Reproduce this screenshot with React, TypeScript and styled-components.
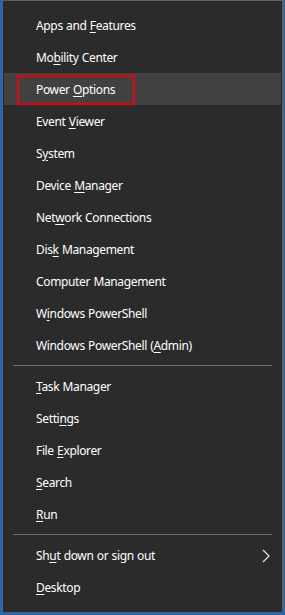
import React from 'react';
import styled, { createGlobalStyle } from 'styled-components';

type Item = {
	label: string;
	key: number; // index of the access-key letter
	hover?: boolean;
	marked?: boolean;
	submenu?: boolean;
};

const groups: Item[][] = [
	[
		{ label: 'Apps and Features', key: 9 },
		{ label: 'Mobility Center', key: 2 },
		{ label: 'Power Options', key: 6, hover: true, marked: true },
		{ label: 'Event Viewer', key: 6 },
		{ label: 'System', key: 1 },
		{ label: 'Device Manager', key: 7 },
		{ label: 'Network Connections', key: 3 },
		{ label: 'Disk Management', key: 3 },
		{ label: 'Computer Management', key: 13 },
		{ label: 'Windows PowerShell', key: 1 },
		{ label: 'Windows PowerShell (Admin)', key: 20 },
	],
	[
		{ label: 'Task Manager', key: 0 },
		{ label: 'Settings', key: 5 },
		{ label: 'File Explorer', key: 5 },
		{ label: 'Search', key: 0 },
		{ label: 'Run', key: 0 },
	],
	[
		{ label: 'Shut down or sign out', key: 2, submenu: true },
		{ label: 'Desktop', key: 0 },
	],
];

const GlobalStyle = createGlobalStyle`
	html, body {
		margin: 0;
		padding: 0;
		background: #1a6bbd;
	}
	body {
		font-family: "Noto Sans", "Open Sans", sans-serif;
		-webkit-font-smoothing: antialiased;
	}
`;

const Desk = styled.div`
	width: 285px;
	height: 615px;
	padding: 0 0 0 2px;
	box-sizing: border-box;
`;

const Menu = styled.div`
	width: 282px;
	height: 613px;
	box-sizing: border-box;
	background: #2b2b2b;
	border: 1px solid #5f5f5f;
	border-right-width: 2px;
	padding: 8px 1px 0 1px;
	display: flex;
	flex-direction: column;
`;

const Row = styled.div<{ $hover?: boolean }>`
	position: relative;
	height: 32px;
	display: flex;
	align-items: center;
	padding-left: 32px;
	background: ${({ $hover }) => ($hover ? '#414141' : 'transparent')};
	color: #ffffff;
	font-size: 12px;
	letter-spacing: -0.35px;
	word-spacing: 0.5px;
`;

const AccessKey = styled.span`
	text-decoration: underline;
	text-underline-offset: 2px;
	text-decoration-thickness: 1px;
`;

const Marker = styled.div`
	position: absolute;
	left: 13px;
	top: 2px;
	width: 118px;
	height: 30px;
	box-sizing: border-box;
	border: 2px solid #e8000f;
	pointer-events: none;
`;

const Separator = styled.div`
	height: 9px;
	display: flex;
	align-items: center;
	padding: 0 9px 0 9px;

	&::after {
		content: '';
		flex: 1;
		height: 1px;
		background: #6e6e6e;
	}
`;

const Chevron = styled.svg`
	position: absolute;
	right: 11px;
	top: 10px;
`;

const Label = ({ label, k }: { label: string; k: number }) => (
	<span>
		{label.slice(0, k)}
		<AccessKey>{label[k]}</AccessKey>
		{label.slice(k + 1)}
	</span>
);

const App = () => {
	return (
		<>
			<GlobalStyle />
			<Desk>
				<Menu>
					{groups.map((group, gi) => (
						<React.Fragment key={gi}>
							{gi > 0 && <Separator />}
							{group.map((item) => (
								<Row key={item.label} $hover={item.hover}>
									<Label label={item.label} k={item.key} />
									{item.marked && <Marker />}
									{item.submenu && (
										<Chevron width="8" height="14" viewBox="0 0 8 14">
											<polyline points="1,1 7,7 1,13" fill="none" stroke="#e6e6e6" strokeWidth="1.2" />
										</Chevron>
									)}
								</Row>
							))}
						</React.Fragment>
					))}
				</Menu>
			</Desk>
		</>
	);
};

export default App;
